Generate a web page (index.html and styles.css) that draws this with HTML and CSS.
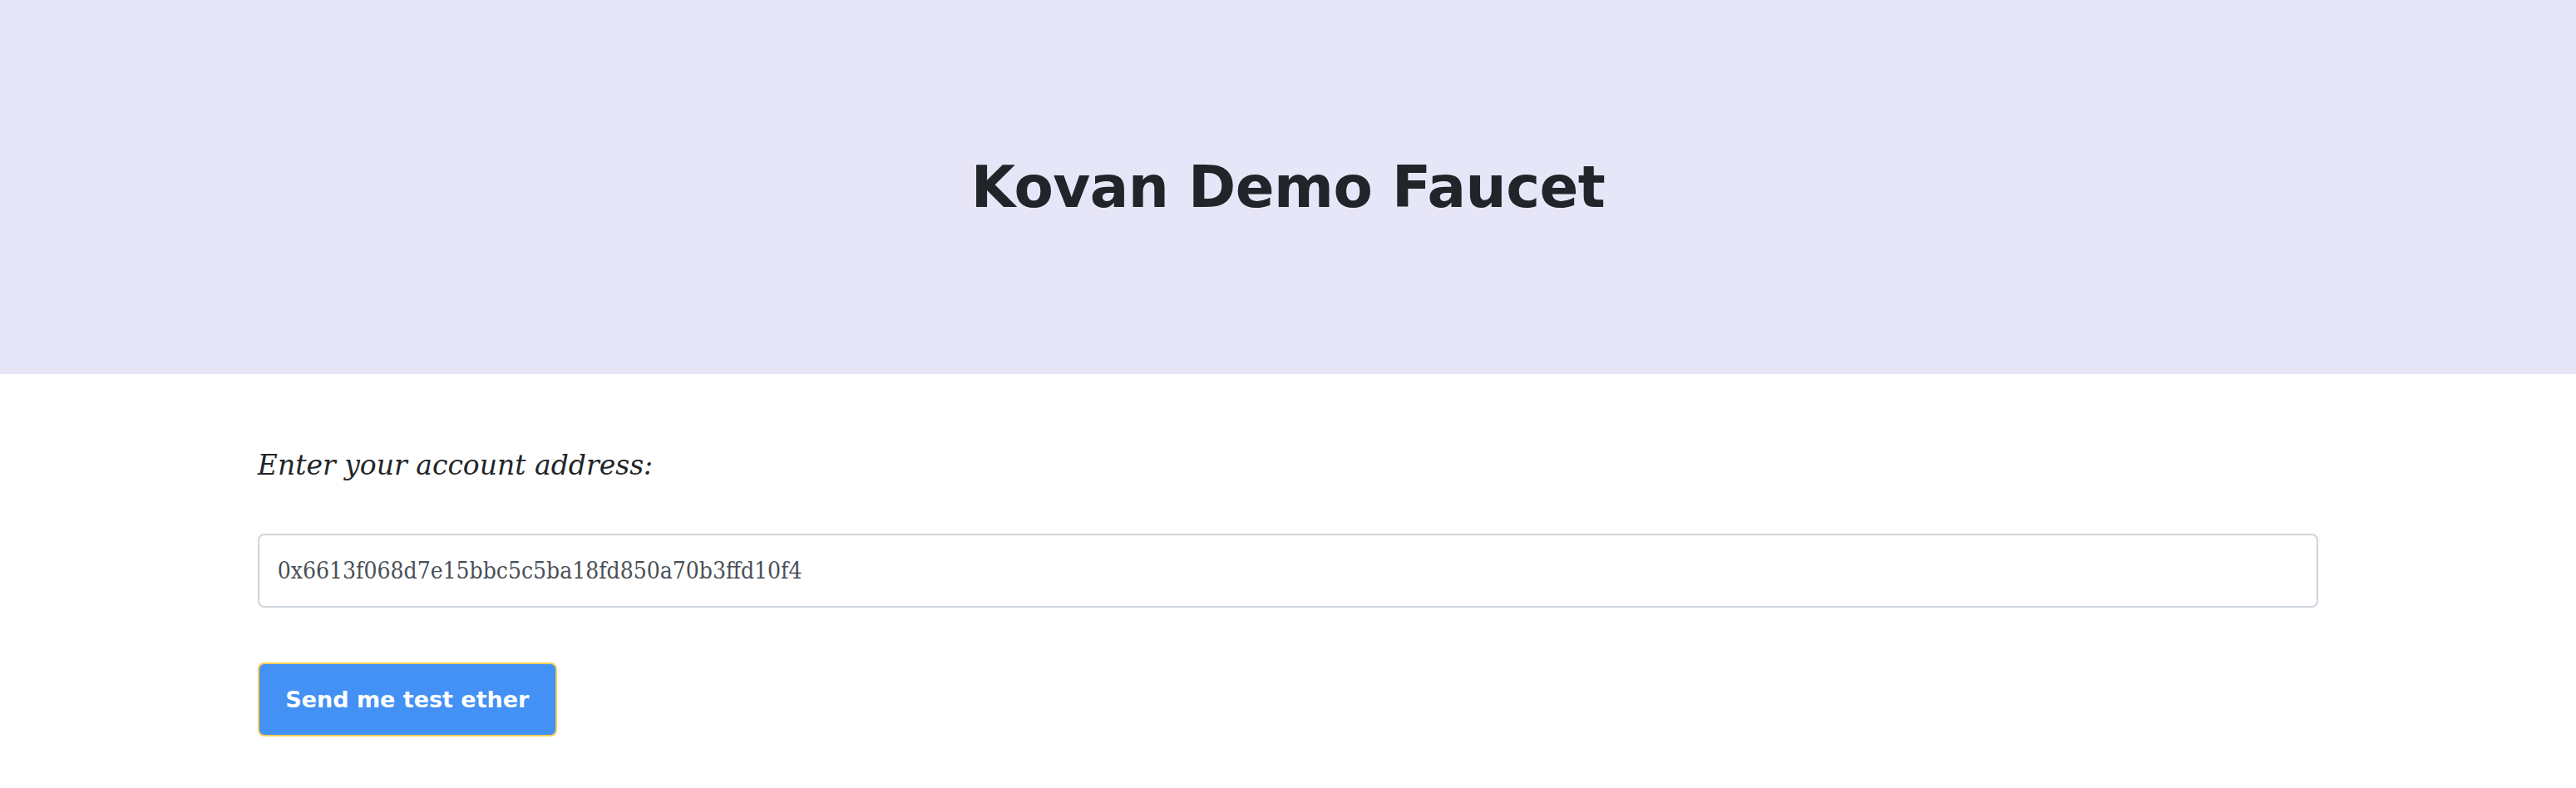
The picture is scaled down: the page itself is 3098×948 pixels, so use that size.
FILE: index.html
```html
<!DOCTYPE html>
<html>
<head>
<meta charset="utf-8">
<link rel="stylesheet" href="styles.css">
</head>
<body>
<header class="hero">
  <h1 class="title">Kovan Demo Faucet</h1>
</header>
<main class="content">
  <label class="label" for="addr">Enter your account address:</label>
  <input class="address" id="addr" type="text" value="0x6613f068d7e15bbc5c5ba18fd850a70b3ffd10f4">
  <div class="actions">
    <button class="send" type="button">Send me test ether</button>
  </div>
</main>
</body>
</html>
```

FILE: styles.css
```css
html, body {
  margin: 0;
  padding: 0;
  background: #ffffff;
}

.hero {
  height: 450px;
  background: #e7e6f8;
  display: flex;
  align-items: center;
  justify-content: center;
}

.title {
  margin: 0;
  font-family: "DejaVu Sans", sans-serif;
  font-weight: 700;
  font-size: 69px;
  line-height: 1;
  color: #212529;
  letter-spacing: -0.5px;
}

.content {
  width: 80%;
  margin: 0 auto;
  display: flex;
  flex-direction: column;
  align-items: flex-start;
  padding-top: 90px;
}

.label {
  font-family: "DejaVu Serif", serif;
  font-style: italic;
  font-size: 33px;
  line-height: 40px;
  color: #212529;
}

.address {
  box-sizing: border-box;
  margin-top: 62px;
  width: 100%;
  height: 89px;
  border: 2px solid #ced4da;
  border-radius: 8px;
  padding: 0 22px;
  font-family: "DejaVu Serif Condensed", "DejaVu Serif", serif;
  font-stretch: condensed;
  font-size: 28px;
  color: #495057;
  background: #fff;
  outline: none;
}

.actions {
  margin-top: 66px;
}

.send {
  box-sizing: border-box;
  height: 89px;
  width: 360px;
  background: #4391f5;
  border: 2px solid #f5cd55;
  border-radius: 8px;
  color: #ffffff;
  font-family: "DejaVu Sans", sans-serif;
  font-weight: 700;
  font-size: 27px;
  padding: 0;
}
```
